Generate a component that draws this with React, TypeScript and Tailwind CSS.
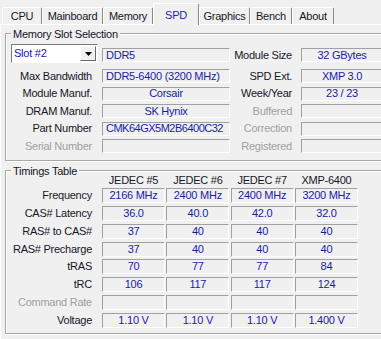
import React from 'react';

const field =
  'border border-t-[#a0a0a0] border-l-[#a0a0a0] border-b-white border-r-white text-[#1a1aa8] flex items-center whitespace-nowrap overflow-hidden';

const tabs = [
  { name: 'CPU', w: 'w-[40px]' },
  { name: 'Mainboard', w: 'w-[61px]' },
  { name: 'Memory', w: 'w-[50px]' },
  { name: 'SPD', w: 'w-[46px]', active: true },
  { name: 'Graphics', w: 'w-[51px]' },
  { name: 'Bench', w: 'w-[42px]' },
  { name: 'About', w: 'w-[42px]' },
];

const slotRows = [
  { left: 'Max Bandwidth', value: 'DDR5-6400 (3200 MHz)', align: 'left', right: 'SPD Ext.', rvalue: 'XMP 3.0' },
  { left: 'Module Manuf.', value: 'Corsair', align: 'center', right: 'Week/Year', rvalue: '23 / 23' },
  { left: 'DRAM Manuf.', value: 'SK Hynix', align: 'center', right: 'Buffered', rvalue: '', rdim: true },
  { left: 'Part Number', value: 'CMK64GX5M2B6400C32', align: 'left', tight: true, right: 'Correction', rvalue: '', rdim: true },
  { left: 'Serial Number', value: '', align: 'left', dim: true, right: 'Registered', rvalue: '', rdim: true },
];

const timings = [
  { label: 'Frequency', values: ['2166 MHz', '2400 MHz', '2400 MHz', '3200 MHz'] },
  { label: 'CAS# Latency', values: ['36.0', '40.0', '42.0', '32.0'] },
  { label: 'RAS# to CAS#', values: ['37', '40', '40', '40'] },
  { label: 'RAS# Precharge', values: ['37', '40', '40', '40'] },
  { label: 'tRAS', values: ['70', '77', '77', '84'] },
  { label: 'tRC', values: ['106', '117', '117', '124'] },
  { label: 'Command Rate', values: ['', '', '', ''], dim: true },
  { label: 'Voltage', values: ['1.10 V', '1.10 V', '1.10 V', '1.400 V'] },
];

const GroupBox: React.FC<{ title: string; className: string; children: React.ReactNode }> = ({
  title,
  className,
  children,
}) => (
  <div
    className={`relative ml-[4px] w-[385px] border border-[#a8a8a8] shadow-[inset_1px_1px_0_#fff,1px_1px_0_#fff] ${className}`}
  >
    <span className="absolute -top-[6px] left-[5px] px-[2px] bg-[#f0f0f0] leading-[13px]">{title}</span>
    {children}
  </div>
);

export default function App() {
  return (
    <div className="w-[381px] h-[339px] overflow-hidden bg-[#f0f0f0] text-[11px] tracking-[-0.25px] leading-none text-[#161628] font-['Liberation_Sans',Arial,sans-serif]">
      <div className="flex items-end h-[24px] pl-[2px]">
        {tabs.map((t) => (
          <div
            key={t.name}
            className={`${t.w} flex items-center justify-center border-t border-l border-r border-t-white border-l-white border-r-[#8a8a8a] rounded-t-[2px] ${
              t.active ? 'h-[22px] pt-[2px] -mb-[1px] relative z-10 bg-[#f0f0f0] text-[#1c1cc8]' : 'h-[17px] pt-[1px]'
            }`}
          >
            {t.name}
          </div>
        ))}
      </div>

      <div className="w-[400px] h-[315px] border-t border-l border-white">
        <GroupBox title="Memory Slot Selection" className="mt-[8px] h-[128px] pt-[10px] pl-[5px]">
          <div className="flex items-start h-[19px]">
            <div className="w-[87px] h-[19px] flex items-center border border-t-[#7a7a7a] border-l-[#7a7a7a] border-b-white border-r-white bg-white">
              <span className="flex-1 pl-[2px] text-[#1414c0]">Slot #2</span>
              <div className="w-[16px] h-[15px] mr-[1px] flex items-center justify-center bg-[#f0f0f0] border border-t-white border-l-white border-b-[#696969] border-r-[#696969]">
                <svg width="7" height="4" viewBox="0 0 7 4">
                  <path d="M0 0H7L3.5 4Z" fill="#000" />
                </svg>
              </div>
            </div>
            <div className={`${field} ml-[4px] mt-[4px] w-[128px] h-[14px] pl-[3px]`}>DDR5</div>
            <div className="w-[62px] mt-[4px] h-[14px] flex items-center justify-end">Module Size</div>
            <div className={`${field} ml-[9px] mt-[4px] w-[82px] h-[14px] justify-center`}>32 GBytes</div>
          </div>
          <div className="mt-[6px] flex flex-col gap-[3.5px]">
            {slotRows.map((r) => (
              <div key={r.left} className="flex items-center h-[14px]">
                <div className={`w-[81px] text-right ${r.dim ? 'text-[#a0a0a0]' : ''}`}>{r.left}</div>
                <div
                  className={`${field} ml-[10px] w-[128px] h-[14px] ${
                    r.align === 'center' ? 'justify-center' : 'pl-[3px]'
                  } ${r.tight ? 'tracking-[-0.5px]' : ''}`}
                >
                  {r.value}
                </div>
                <div className={`w-[62px] text-right ${r.rdim ? 'text-[#a0a0a0]' : ''}`}>{r.right}</div>
                <div className={`${field} ml-[9px] w-[82px] h-[14px] justify-center`}>{r.rvalue}</div>
              </div>
            ))}
          </div>
        </GroupBox>

        <GroupBox title="Timings Table" className="mt-[9px] h-[164px] pt-[2px] pl-[5px]">
          <div className="flex items-center h-[15px]">
            <div className="w-[81px]" />
            <div className="ml-[10px] grid grid-cols-[repeat(4,63px)] gap-x-[1.33px]">
              {['JEDEC #5', 'JEDEC #6', 'JEDEC #7', 'XMP-6400'].map((h) => (
                <div key={h} className="text-center">
                  {h}
                </div>
              ))}
            </div>
          </div>
          <div className="flex flex-col gap-[2.86px]">
            {timings.map((r) => (
              <div key={r.label} className="flex items-center h-[15px]">
                <div className={`w-[81px] text-right ${r.dim ? 'text-[#a0a0a0]' : ''}`}>{r.label}</div>
                <div className="ml-[10px] grid grid-cols-[repeat(4,63px)] gap-x-[1.33px]">
                  {r.values.map((v, i) => (
                    <div key={i} className={`${field} h-[15px] justify-center`}>
                      {v}
                    </div>
                  ))}
                </div>
              </div>
            ))}
          </div>
        </GroupBox>
      </div>
    </div>
  );
}
